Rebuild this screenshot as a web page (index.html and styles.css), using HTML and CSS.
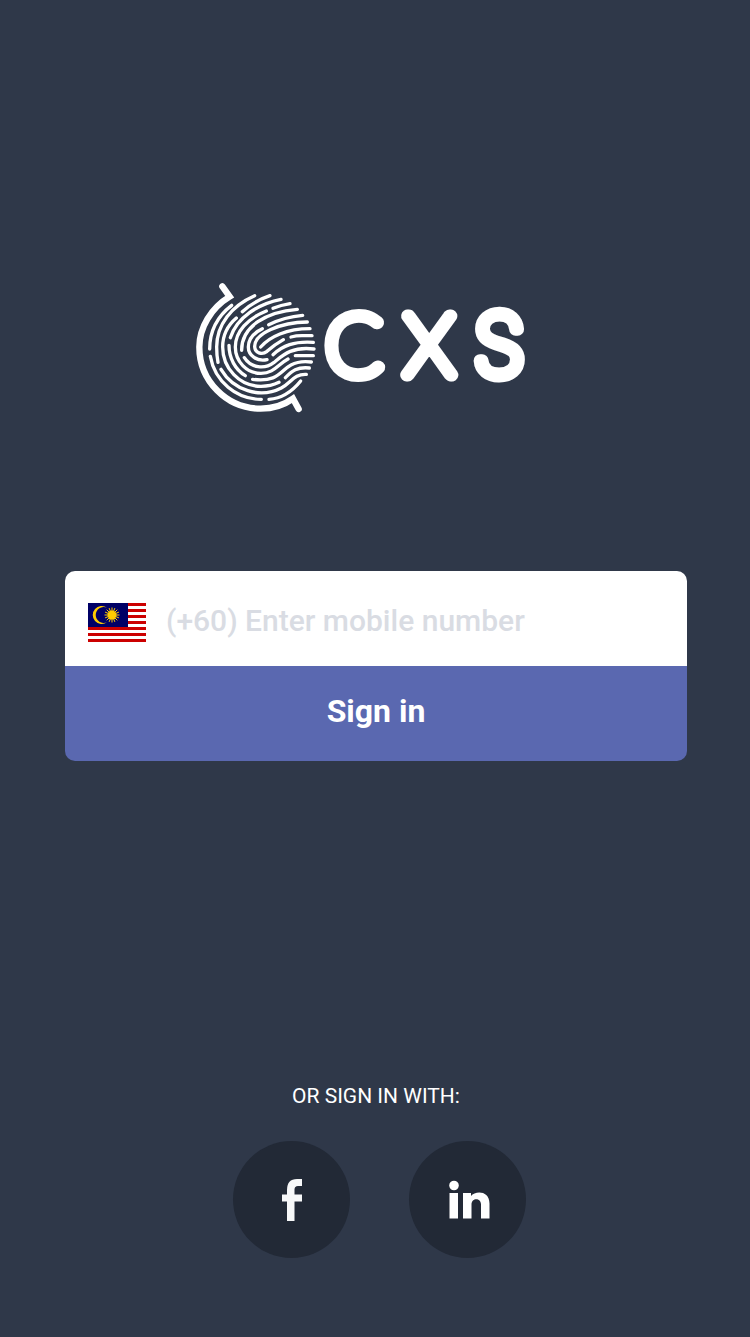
FILE: index.html
```html
<!DOCTYPE html>
<html lang="en">
<head>
<meta charset="utf-8">
<meta name="viewport" content="width=device-width, initial-scale=1">
<title>CXS – Sign in</title>
<link rel="stylesheet" href="styles.css">
</head>
<body>
<main class="screen">
  <header class="brand">
    <svg class="brand-logo" viewBox="0 0 1014 414" role="img" aria-label="CXS">
      <g class="ring">
        <path d="M97 10L119 41C63 75 28 134 28 192C28 294 110 377 212 377C247 377 281 367 309 347L326 378"/>
      </g>
      <g class="ridges" transform="translate(0 -20)">
        <path d="M125 87C82 120 59 165 59 218"/>
        <path d="M194 58C125 88 80 145 80 212Q80 238 84 258"/>
        <path d="M240 58Q192 74 157 106"/>
        <path d="M273 69C204 83 141 123 121 184"/>
        <path d="M300 82Q273 86 249 96"/>
        <path d="M322 99C230 106 154 150 155 222"/>
        <path d="M338 117Q283 122 236 145"/>
        <path d="M139 125C112 148 98 178 98 212C98 276 149 330 213 330Q242 330 267 318"/>
        <path d="M117 207C117 246 136 280 166 298"/>
        <path d="M229 104C174 126 136 165 136 212C136 255 170 291 213 291C252 291 264 264 294 248"/>
        <path d="M217 157C190 170 175 187 175 212C175 238 202 257 231 250"/>
        <path d="M352 137C270 138 194 172 194 210C194 230 216 237 231 225Q252 206 280 190"/>
        <path d="M360 157C290 157 239 181 212 212"/>
        <path d="M366 178H336Q318 178 303 182"/>
        <path d="M370 198C312 194 278 208 249 235"/>
        <path d="M163 244C183 275 224 280 251 259C276 239 304 209 372 218"/>
        <path d="M370 238H316"/>
        <path d="M188 309C265 319 272 282 303 266Q329 252 364 257"/>
        <path d="M358 275C320 271 306 285 286 304"/>
        <path d="M93 279C130 342 210 368 274 335C304 319 312 292 349 294"/>
        <path d="M61 240C74 315 139 369 214 369"/>
        <path d="M237 369C278 366 307 345 332 314"/>
      </g>
      <text class="wordmark" x="406 643 851" y="275">CX<tspan class="wordmark-wide">S</tspan></text>
    </svg>
  </header>

  <form class="login" action="#" method="post">
    <div class="phone-row">
      <svg class="flag" viewBox="0 0 58 42" role="img" aria-label="Malaysia">
        <path fill="#fff" d="M0 0H58V42H0z"/>
        <path stroke="#c00" stroke-width="3" d="M0 1.500H58M0 7.500H58M0 13.500H58M0 19.500H58M0 25.500H58M0 31.500H58M0 37.500H58"/>
        <path fill="#006" d="M0 0H40V24H0z"/>
        <path fill="#fc0" d="M19 4.700A9 9 0 1 0 19 19.300A8 8 0 1 1 19 4.700z"/>
        <circle cx="24" cy="12" r="4.500" fill="#fc0"/>
        <path stroke="#fc0" stroke-width="1" d="M24 4.500V19.500M16.500 12H31.500M18.700 6.700L29.300 17.300M29.300 6.700L18.700 17.300M21.100 5.100L26.900 18.900M26.900 5.100L21.100 18.900M17.100 9.100L30.900 14.900M30.900 9.100L17.100 14.900"/>
      </svg>
      <input class="phone-input" type="tel" name="phone" aria-label="Mobile number" placeholder="(+60) Enter mobile number">
    </div>
    <button class="submit" type="submit">Sign in</button>
  </form>

  <section class="social">
    <p class="social-title">OR SIGN IN WITH:</p>
    <div class="social-links">
      <a class="social-link" href="#" aria-label="Facebook">
        <svg class="social-icon" viewBox="0 0 44 44" aria-hidden="true"><path fill="#f7f8f9" d="M17 43V23.500H12V16.500H17V12Q17 1 27 1H32V8H28Q24.500 8 24.500 11.500V16.500H32V23.500H24.500V43z"/></svg>
      </a>
      <a class="social-link" href="#" aria-label="LinkedIn">
        <svg class="social-icon" viewBox="0 0 44 44" aria-hidden="true"><circle cx="8" cy="7.500" r="4.800" fill="#fff"/><path fill="#fff" d="M3.500 15H12V40.500H3.500zM17 15H25V18C29 12.500 43.500 12 43.500 25.500V40.500H35V26.500C35 19.500 25.500 19.500 25.500 26.500V40.500H17z"/></svg>
      </a>
    </div>
  </section>
</main>
</body>
</html>
```
FILE: styles.css
```css
* {
  box-sizing: border-box;
}

body {
  margin: 0;
  background: #2f3849;
  color: #fff;
  font-family: Roboto, "Liberation Sans", sans-serif;
}

.screen {
  display: flex;
  flex-direction: column;
  justify-content: space-between;
  min-height: 100vh;
  padding: 283px 63px 79px 65px;
}

.brand {
  display: flex;
  padding-left: 125px;
}

.brand-logo {
  width: 338px;
  height: 138px;
  overflow: visible;
}

.ring,
.ridges {
  fill: none;
  stroke: #fff;
  stroke-linecap: round;
  stroke-linejoin: miter;
}

.ring {
  stroke-width: 19px;
}

.ridges {
  stroke-width: 10px;
}

.wordmark {
  fill: #fff;
  stroke: #fff;
  stroke-width: 39px;
  stroke-linejoin: round;
  font-family: Lato, Inter, sans-serif;
  font-size: 250px;
  font-weight: 100;
}

.wordmark-wide {
  font-family: Inter, sans-serif;
}

.login {
  display: flex;
  flex-direction: column;
  overflow: hidden;
  border-radius: 10px;
  margin-bottom: 174px;
}

.phone-row {
  display: flex;
  align-items: center;
  gap: 20px;
  height: 95px;
  padding: 12px 23px 0;
  background: #fff;
}

.flag {
  flex: none;
  width: 58px;
  height: 42px;
}

.phone-input {
  flex: 1;
  min-width: 0;
  height: 48px;
  margin-bottom: 8px;
  padding: 0;
  border: 0;
  outline: 0;
  background: transparent;
  color: #303849;
  font: 500 30px/40px Roboto, "Liberation Sans", sans-serif;
}

.phone-input::placeholder {
  color: #d9dce3;
  opacity: 1;
}

.submit {
  height: 95px;
  padding: 0 0 5px;
  border: 0;
  background: #5a68b0;
  color: #fff;
  font: 700 32px/40px Roboto, "Liberation Sans", sans-serif;
}

.social {
  display: flex;
  flex-direction: column;
  align-items: center;
  gap: 33px;
}

.social-title {
  margin: 0;
  font-size: 21px;
  line-height: 24px;
}

.social-links {
  display: flex;
  gap: 59px;
  padding-left: 7px;
}

.social-link {
  display: flex;
  align-items: center;
  justify-content: center;
  width: 117px;
  height: 117px;
  border-radius: 50%;
  background: #222936;
}

.social-icon {
  width: 44px;
  height: 44px;
}
```
